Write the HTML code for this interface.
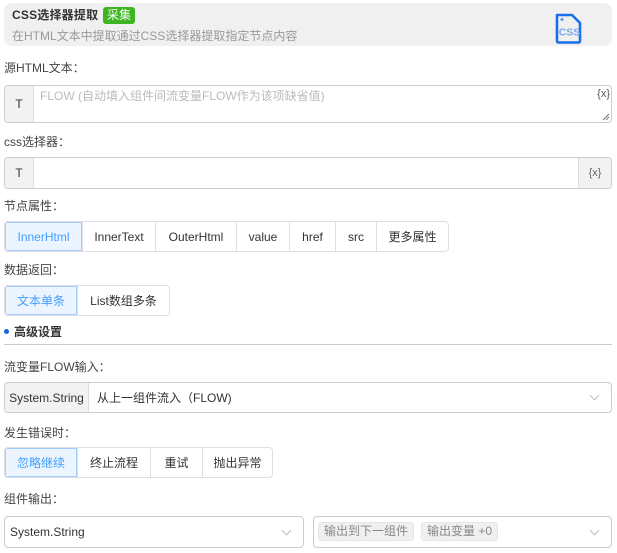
<!DOCTYPE html>
<html><head><meta charset="utf-8"><style>
*{box-sizing:border-box;margin:0;padding:0}
body{width:617px;height:553px;background:#fff;font-family:"Liberation Sans","Noto Sans CJK SC",sans-serif;font-size:12px;color:#333;position:relative;overflow:hidden}
.a{position:absolute}
.lbl{position:absolute;left:4px;font-size:12px;color:#444;line-height:16px}
.box{position:absolute;border:1px solid #ccc;border-radius:4px;background:#fff;overflow:hidden}
.add{position:absolute;top:0;bottom:0;background:#f2f2f2;color:#333;display:flex;align-items:center;justify-content:center;font-weight:normal}
.grp{position:absolute;display:flex;height:31px;border:1px solid #dcdfe6;border-radius:4px;overflow:hidden;background:#fff}
.grp div{display:flex;align-items:center;justify-content:center;border-left:1px solid #dcdfe6;color:#333;font-size:12px;flex:none}
.grp div:first-child{border-left:none}
.grp .on{background:#ecf5ff;color:#409eff;outline:1px solid #a0cfff;outline-offset:-1px}
.chev{position:absolute;width:7px;height:7px;border-right:1px solid #bbb;border-bottom:1px solid #bbb;transform:rotate(45deg)}
.tag{position:absolute;top:5px;height:19px;background:#f0f0f0;border:1px solid #e6e6e6;border-radius:3px;color:#888;font-size:12px;line-height:17px;padding:0 5px}
</style></head><body>
<div class="a" style="left:4px;top:3px;width:608px;height:43px;background:#f0f0f0;border-radius:8px"></div>
<div class="a" style="left:12px;top:7px;font-size:12px;font-weight:bold;color:#333;line-height:17px;letter-spacing:0.2px;white-space:nowrap">CSS选择器提取</div>
<div class="a" style="left:103px;top:7px;width:32px;height:17px;background:#3cb521;border-radius:3px;color:#fff;font-size:12px;line-height:17px;text-align:center">采集</div>
<div class="a" style="left:12px;top:28px;font-size:12px;color:#999;line-height:16px">在HTML文本中提取通过CSS选择器提取指定节点内容</div>
<svg class="a" style="left:554px;top:13px" width="30" height="31" viewBox="0 0 30 31"><path d="M3 2H18L26 10V28a1.5 1.5 0 0 1-1.5 1.5H4.5A1.5 1.5 0 0 1 3 28Z" fill="none" stroke="#1a6fe8" stroke-width="2.6" stroke-linejoin="round"/><circle cx="8" cy="6.5" r="1.5" fill="#5b95ee"/><text x="15.5" y="22.5" font-family="Liberation Sans" font-weight="bold" font-size="10.5" fill="#7aa6f0" text-anchor="middle">CSS</text></svg>

<div class="lbl" style="top:60px">源HTML文本：</div>
<div class="box" style="left:4px;top:85px;width:608px;height:38px">
 <div class="add" style="left:0;width:29px;border-right:1px solid #ddd">T</div>
 <div class="a" style="left:35px;top:2px;color:#bbb;font-size:12px;line-height:16px">FLOW (自动填入组件间流变量FLOW作为该项缺省值)</div>
 <div class="a" style="right:1px;top:2px;color:#555;font-size:11px">{x}</div>
 <svg class="a" style="right:1px;bottom:1px" width="8" height="8"><path d="M7 1L1 7M7 4L4 7" stroke="#777" stroke-width="1"/></svg>
</div>

<div class="lbl" style="top:134px">css选择器：</div>
<div class="box" style="left:4px;top:157px;width:608px;height:32px">
 <div class="add" style="left:0;width:29px;border-right:1px solid #ddd">T</div>
 <div class="add" style="right:0;width:33px;border-left:1px solid #ddd;color:#666;font-size:11px">{x}</div>
</div>

<div class="lbl" style="top:198px">节点属性：</div>
<div class="grp" style="left:4px;top:221px">
 <div class="on" style="width:77px">InnerHtml</div><div style="width:73px">InnerText</div><div style="width:81px">OuterHtml</div><div style="width:53px">value</div><div style="width:46px">href</div><div style="width:41px">src</div><div style="width:72px">更多属性</div>
</div>

<div class="lbl" style="top:262px">数据返回：</div>
<div class="grp" style="left:4px;top:285px">
 <div class="on" style="width:72px">文本单条</div><div style="width:92px">List数组多条</div>
</div>

<div class="a" style="left:4px;top:329px;width:5px;height:5px;border-radius:50%;background:#1a66e0"></div>
<div class="a" style="left:14px;top:324px;font-size:12px;font-weight:bold;color:#333;line-height:16px">高级设置</div>
<div class="a" style="left:4px;top:344px;width:608px;height:1px;background:#ccc"></div>

<div class="lbl" style="top:359px">流变量FLOW输入：</div>
<div class="box" style="left:4px;top:382px;width:608px;height:31px">
 <div class="add" style="left:0;width:84px;border-right:1px solid #ddd">System.String</div>
 <div class="a" style="left:92px;top:7px;line-height:16px">从上一组件流入（FLOW)</div>
 <div class="chev" style="right:13px;top:9px"></div>
</div>

<div class="lbl" style="top:425px">发生错误时：</div>
<div class="grp" style="left:4px;top:447px">
 <div class="on" style="width:72px">忽略继续</div><div style="width:73px">终止流程</div><div style="width:52px">重试</div><div style="width:70px">抛出异常</div>
</div>

<div class="lbl" style="top:491px">组件输出：</div>
<div class="box" style="left:4px;top:516px;width:300px;height:32px">
 <div class="a" style="left:5px;top:7px;line-height:16px">System.String</div>
 <div class="chev" style="right:13px;top:10px"></div>
</div>
<div class="box" style="left:313px;top:516px;width:299px;height:32px">
 <div class="tag" style="left:4px">输出到下一组件</div>
 <div class="tag" style="left:107px">输出变量 +0</div>
 <div class="chev" style="right:13px;top:10px"></div>
</div>
</body></html>
